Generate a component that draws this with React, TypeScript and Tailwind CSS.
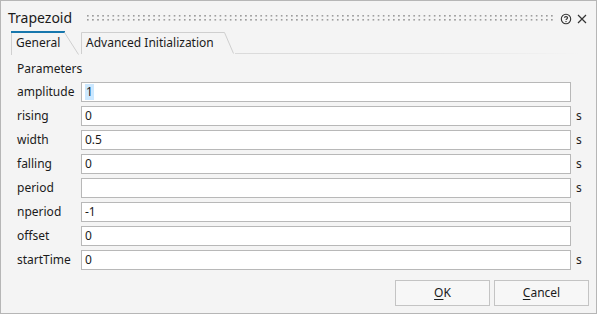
import React from "react";

const rows: { label: string; value: string; unit?: string; selected?: boolean }[] = [
  { label: "amplitude", value: "1", selected: true },
  { label: "rising", value: "0", unit: "s" },
  { label: "width", value: "0.5", unit: "s" },
  { label: "falling", value: "0", unit: "s" },
  { label: "period", value: "", unit: "s" },
  { label: "nperiod", value: "-1" },
  { label: "offset", value: "0" },
  { label: "startTime", value: "0", unit: "s" },
];

function Grip() {
  return (
    <svg className="block h-[8px] w-full" preserveAspectRatio="none">
      <defs>
        <pattern id="grip" x="0" y="0" width="5.1" height="4" patternUnits="userSpaceOnUse">
          <rect x="0" y="0" width="1.6" height="1.6" fill="#9a9a9a" />
        </pattern>
      </defs>
      <rect x="0" y="0" width="100%" height="8" fill="url(#grip)" />
    </svg>
  );
}

function HelpIcon() {
  return (
    <svg width="12" height="12" viewBox="0 0 12 12" className="block">
      <circle cx="6" cy="6" r="4.7" fill="none" stroke="#333" strokeWidth="1.1" />
      <path d="M4.4 4.8 C4.4 3.2 7.6 3.2 7.6 4.8 C7.6 6 6 5.9 6 7.1" fill="none" stroke="#333" strokeWidth="1.1" />
      <rect x="5.45" y="8" width="1.1" height="1.1" fill="#333" />
    </svg>
  );
}

function CloseIcon() {
  return (
    <svg width="12" height="12" viewBox="0 0 12 12" className="block">
      <path d="M2 2 L10 10 M10 2 L2 10" stroke="#333" strokeWidth="1.2" />
    </svg>
  );
}

export default function App() {
  return (
    <div
      className="w-[597px] h-[314px] border border-[#b6b6b6] bg-[#f4f4f4] flex flex-col text-[#1b1b1b] overflow-hidden"
      style={{ fontFamily: '"Segoe UI", "Noto Sans", sans-serif' }}
    >
      {/* title bar */}
      <div className="h-[30px] flex items-start pt-[7px] pl-[7px] pr-[8px]">
        <span className="text-[14px] leading-[20px]">Trapezoid</span>
        <div className="flex-1 ml-[15px] mr-[7px] pt-[7px]">
          <Grip />
        </div>
        <div className="flex items-center gap-[4px] pt-[5px]">
          <HelpIcon />
          <CloseIcon />
        </div>
      </div>

      {/* tabs */}
      <div className="h-[24px] flex items-stretch pl-[9px] pr-[16px]">
        <div className="relative w-[69px]">
          <svg className="absolute inset-0" width="69" height="24">
            <path d="M1.5 24 L1.5 1.5" stroke="#d0d0d0" strokeWidth="1" fill="none" />
            <path d="M1 1 L55 1" stroke="#1777ad" strokeWidth="2" fill="none" />
            <path d="M54.5 1.5 L68.5 23.5" stroke="#cfcfcf" strokeWidth="1" fill="none" />
          </svg>
          <span className="relative block pl-[6px] pt-[4px] text-[12px] leading-[16px]">General</span>
        </div>
        <div className="relative w-[154px] ml-[2px]">
          <svg className="absolute inset-0" width="154" height="24">
            <path d="M0.5 23 L0.5 1.5 L143.5 1.5 L152.5 22.5" stroke="#cfcfcf" strokeWidth="1" fill="none" />
          </svg>
          <span className="relative block pl-[5px] pt-[4px] text-[12px] leading-[16px]">Advanced Initialization</span>
        </div>
        <div className="flex-1 flex flex-col justify-end pb-[1px]">
          <div className="h-px bg-gradient-to-r from-[#dadada] via-[#e2e2e2] to-[#f4f4f4]" />
        </div>
      </div>

      {/* content */}
      <div className="flex-1 flex flex-col pl-[16px] pt-[6px]">
        <div className="text-[12px] leading-[16px]">Parameters</div>
        <div className="mt-[5px] grid grid-cols-[64px_490px_auto] gap-y-[4px] items-center">
          {rows.map((r) => (
            <React.Fragment key={r.label}>
              <span className="text-[12px] leading-[16px]">{r.label}</span>
              <div className="h-[20px] border border-[#b8b8b8] bg-white flex items-center pl-[3px] text-[12px] leading-[16px]">
                {r.selected ? (
                  <span className="bg-[#cce8ff] px-px">{r.value}</span>
                ) : (
                  <span>{r.value}</span>
                )}
              </div>
              <span className="pl-[5px] text-[12px] leading-[16px]">{r.unit ?? ""}</span>
            </React.Fragment>
          ))}
        </div>
        <div className="mt-[10px] flex justify-end gap-[4px] pr-[7px]">
          <button className="w-[95px] h-[26px] border border-[#c4c4c4] bg-[#f7f7f7] text-[12px] leading-[16px]">
            <span className="underline underline-offset-2">O</span>K
          </button>
          <button className="w-[95px] h-[26px] border border-[#c4c4c4] bg-[#f7f7f7] text-[12px] leading-[16px]">
            <span className="underline underline-offset-2">C</span>ancel
          </button>
        </div>
      </div>
    </div>
  );
}
